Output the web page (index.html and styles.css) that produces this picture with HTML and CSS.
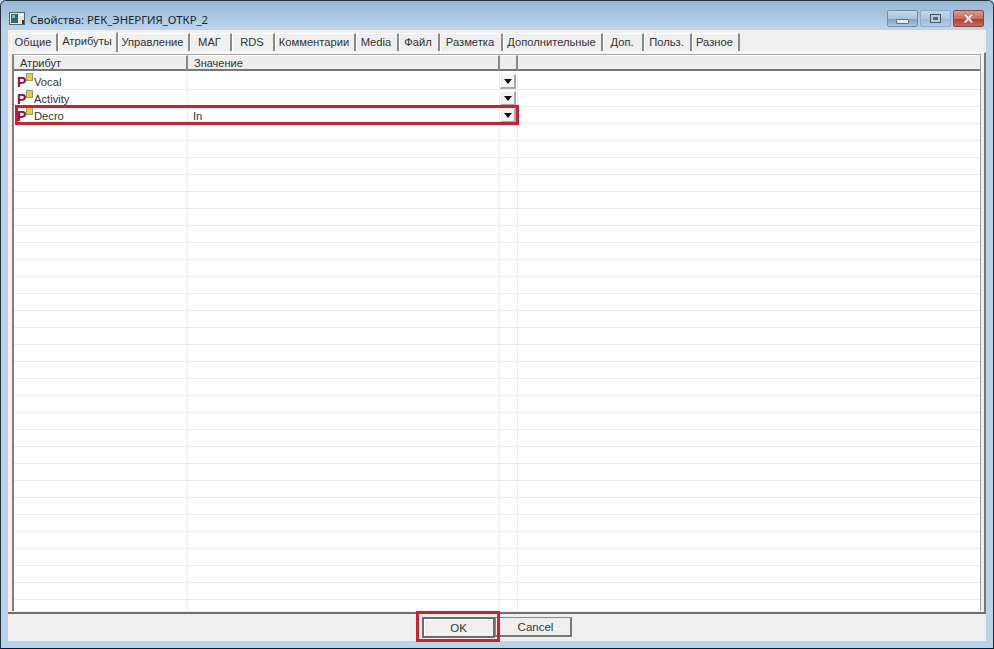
FILE: index.html
```html
<!DOCTYPE html>
<html lang="ru">
<head>
<meta charset="utf-8">
<title>Свойства</title>
<link rel="stylesheet" href="styles.css">
</head>
<body>
<div class="window">
  <div class="titlebar">
    <svg class="appicon" width="16" height="13" viewBox="0 0 16 13"><rect x="0.5" y="0.5" width="15" height="12" fill="#dfe6e6" stroke="#55666a"/><rect x="2" y="2" width="7" height="9" fill="#2f6a68"/><rect x="3" y="3" width="3" height="3" fill="#8fb5b0"/><rect x="11" y="2" width="3" height="2" fill="#fff"/><rect x="13" y="8" width="2" height="4" fill="#333"/></svg>
    <span class="title">Свойства: РЕК_ЭНЕРГИЯ_ОТКР_2</span>
    <div class="caption">
      <div class="capbtn min"><i class="minglyph"></i></div>
      <div class="capbtn max"><i class="maxglyph"></i></div>
      <div class="capbtn close"><svg width="15" height="11" viewBox="0 0 15 11"><path d="M2 1h3l2.500 2.500L10 1h3L9.300 5.500 13 10h-3L7.500 7.500 5 10H2l3.700-4.500z" fill="#f4eeea" stroke="#8a3a30" stroke-width="0.500"/></svg></div>
    </div>
  </div>
  <div class="client">
    <div class="tabs">
      <div class="tab w47">Общие</div>
      <div class="tab active w60">Атрибуты</div>
      <div class="tab w72">Управление</div>
      <div class="tab w42">МАГ</div>
      <div class="tab w43">RDS</div>
      <div class="tab w81">Комментарии</div>
      <div class="tab w43">Media</div>
      <div class="tab w41">Файл</div>
      <div class="tab w63">Разметка</div>
      <div class="tab w100">Дополнительные</div>
      <div class="tab w41">Доп.</div>
      <div class="tab w48">Польз.</div>
      <div class="tab w48">Разное</div>
    </div>
    <div class="panel">
      <div class="list">
        <div class="header">
          <div class="hcell c1">Атрибут</div>
          <div class="hcell c2">Значение</div>
          <div class="hcell c3"></div>
          <div class="hcell c4"></div>
        </div>
        <div class="rows">
          <div class="row"><div class="cell c1"><span class="pico">P</span><i class="sq"></i><span>Vocal</span></div><div class="cell c2"></div><div class="cell c3"><div class="drop"><i class="arrow"></i></div></div><div class="cell c4"></div></div>
          <div class="row"><div class="cell c1"><span class="pico">P</span><i class="sq"></i><span>Activity</span></div><div class="cell c2"></div><div class="cell c3"><div class="drop"><i class="arrow"></i></div></div><div class="cell c4"></div></div>
          <div class="row"><div class="cell c1"><span class="pico">P</span><i class="sq"></i><span>Decro</span></div><div class="cell c2">In</div><div class="cell c3"><div class="drop"><i class="arrow"></i></div></div><div class="cell c4"></div></div>
          <div class="filler"></div>
        </div>
        <div class="mark markrow"></div>
      </div>
    </div>
    <div class="footer">
      <div class="okwrap">
        <button class="btn ok">OK</button>
        <div class="mark markok"></div>
      </div>
      <button class="btn cancel">Cancel</button>
    </div>
  </div>
</div>
</body>
</html>
```
FILE: styles.css
```css
* { box-sizing: border-box; }
html, body { margin: 0; padding: 0; height: 100%; background: #b9d3ea; overflow: hidden; }
body { font-family: "Liberation Sans", Arial, sans-serif; font-size: 12px; color: #222; }

.window {
  width: 994px; height: 649px;
  display: flex; flex-direction: column;
  background: #b9d3eb;
  border: 1px solid #25323e;
  border-bottom: 1px solid #10181e;
  border-radius: 6px 6px 0 0;
  box-shadow: inset 0 -2px 0 #a9dcf2;
  padding: 0 7px 7px;
}
.titlebar {
  margin: 0 -7px; padding: 0 9px 0 8px;
  height: 29px; flex: none;
  display: flex; align-items: center;
  background: linear-gradient(#97b8d6 0, #a9c6e0 50%, #bcd5ec 100%);
  border-radius: 6px 6px 0 0;
}
.appicon { flex: none; margin: 6px 5px 0 0; }
.title { font-family: "Noto Sans", sans-serif; font-size: 11.350px; color: #1c2630; padding-top: 7px; }
.caption { margin-left: auto; display: flex; gap: 2px; align-self: flex-start; margin-top: 9px; }
.capbtn { height: 17px; display: flex; align-items: center; justify-content: center; border: 1px solid #6f8ba8; border-radius: 2px; }
.min { width: 31px; background: linear-gradient(#c4d7ea 0, #a9c3dc 50%, #7f9ebd 55%, #b0c8df 100%); }
.max { width: 31px; background: linear-gradient(#c0d5e9 0, #aec8e0 50%, #9dbad6 55%, #b6cee4 100%); border-color: #90acc8; }
.close { width: 31px; background: linear-gradient(#d79a8c 0, #c9705e 50%, #b0402e 55%, #c96a55 100%); border-color: #7d4a48; }
.minglyph { display: block; width: 13px; height: 5px; margin-top: 5px; background: #e4ecf3; border: 1px solid #5a7088; border-radius: 1px; }
.maxglyph { display: block; width: 11px; height: 9px; border: 1px solid #44586c; box-shadow: inset 0 0 0 2px #b8cde1, inset 0 0 0 4px #50667c; }

.client { flex: 1; display: flex; flex-direction: column; background: #efefef; min-height: 0; }
.tabs { height: 22px; flex: none; display: flex; align-items: flex-end; padding-left: 3px; }
.tab {
  height: 18px; margin-bottom: 1px; flex: none;
  display: flex; align-items: center; justify-content: center;
  font-size: 11.200px; color: #333;
  border-top: 1px solid #fff; border-left: 1px solid #fff;
  border-right: 2px solid #8a8a8a;
  background: #efefef;
  padding: 0 2px 1px 0;
}
.tab.active { height: 20px; margin-bottom: 0; background: #f2f2f2; padding: 0 1px 3px 0; z-index: 1; }
.w41 { width: 41px; } .w42 { width: 42px; } .w43 { width: 43px; } .w47 { width: 47px; }
.w48 { width: 48px; } .w60 { width: 60px; } .w63 { width: 63px; } .w72 { width: 72px; }
.w81 { width: 81px; } .w100 { width: 100px; }

.panel {
  flex: 1; min-height: 0; display: flex;
  padding: 1px 3px 1px 4px;
  border-top: 1px solid #fff;
  border-right: 2px solid #777;
  border-bottom: 2px solid #6e6e6e;
  background: #f0f0f0;
}
.list {
  flex: 1; position: relative; display: flex; flex-direction: column; min-height: 0;
  background: #fff;
  border-left: 2px solid #808080;
  border-top: 1px solid #aaa;
  border-right: 1px solid #a0a0a0;
}
.header { height: 18px; flex: none; display: flex; background: #fff; }
.hcell {
  height: 16px; padding: 0 0 0 6px; font-size: 11px; line-height: 14px; color: #333;
  background: #ededed; border-bottom: 2px solid #777; border-right: 2px solid #888; border-top: 1px solid #fff;
}
.c1 { width: 174px; flex: none; }
.c2 { width: 312px; flex: none; }
.c3 { width: 18px; flex: none; }
.c4 { flex: 1; }
.hcell.c4 { border-right: 0; }

.rows { flex: 1; min-height: 0; display: flex; flex-direction: column; }
.row { height: 17px; flex: none; display: flex; border-bottom: 1px solid #ececec; }
.cell { height: 16px; border-right: 1px solid #ececec; display: flex; align-items: flex-end; line-height: 14px; font-size: 11.200px; color: #333; white-space: nowrap; }
.cell.c2 { padding-left: 5px; }
.cell.c4 { border-right: 0; }
.filler {
  flex: 1; min-height: 0;
  background-image:
    linear-gradient(to right, transparent 173px, #ececec 173px, #ececec 174px, transparent 174px, transparent 485px, #ececec 485px, #ececec 486px, transparent 486px, transparent 503px, #ececec 503px, #ececec 504px, transparent 504px),
    repeating-linear-gradient(to bottom, transparent 0, transparent 16px, #ececec 16px, #ececec 17px);
}
.pico { font-weight: bold; font-size: 14px; line-height: 14px; color: #8c0f3c; width: 9px; margin-left: 3px; flex: none; }
.sq { width: 7px; height: 8px; flex: none; align-self: flex-start; margin: 0 1px 0 0; background: #e0d52a; border: 1px solid #9a9a68; }
.drop {
  width: 16px; height: 15px; display: flex; align-items: center; justify-content: center;
  background: #f2f2f2; border-right: 2px solid #aaa; border-bottom: 2px solid #aaa;
  border-top: 1px solid #fff; border-left: 1px solid #fff;
}
.arrow { width: 0; height: 0; border-left: 4px solid transparent; border-right: 4px solid transparent; border-top: 5px solid #111; }

.mark { position: absolute; border: 3px solid #cf2030; pointer-events: none; }
.markrow { left: 1px; top: 50px; width: 504px; height: 20px; }

.footer { flex: none; height: 27px; display: flex; justify-content: center; padding-top: 3px; }
.okwrap { position: relative; }
.btn { display: block; font-family: "Liberation Sans", Arial, sans-serif; font-size: 11.500px; color: #333; background: #efefef; padding: 0; }
.ok { width: 73px; height: 21px; border: 2px solid #6a6a6a; box-shadow: inset 1px 1px 0 #fff; }
.cancel { width: 77px; height: 20px; border: 1px solid #888; border-right: 2px solid #777; border-bottom: 2px solid #777; padding-left: 5px; }
.markok { left: -6px; top: -6px; width: 84px; height: 31px; }
```
